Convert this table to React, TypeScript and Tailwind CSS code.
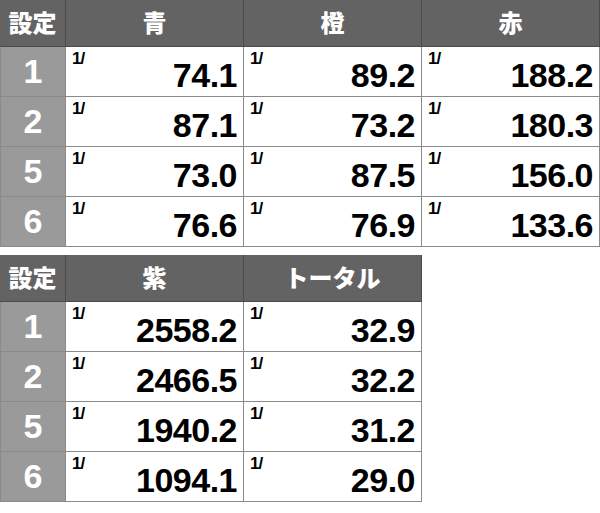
import React from "react";

const font = { fontFamily: '"Liberation Sans", Arial, sans-serif' };
const cjk = { fontFamily: '"Noto Sans CJK JP", "Noto Sans", sans-serif' };

type Table = { heads: string[]; rows: { s: string; v: string[] }[] };

const t1: Table = {
  heads: ["青", "橙", "赤"],
  rows: [
    { s: "1", v: ["74.1", "89.2", "188.2"] },
    { s: "2", v: ["87.1", "73.2", "180.3"] },
    { s: "5", v: ["73.0", "87.5", "156.0"] },
    { s: "6", v: ["76.6", "76.9", "133.6"] },
  ],
};
const t2: Table = {
  heads: ["紫", "トータル"],
  rows: [
    { s: "1", v: ["2558.2", "32.9"] },
    { s: "2", v: ["2466.5", "32.2"] },
    { s: "5", v: ["1940.2", "31.2"] },
    { s: "6", v: ["1094.1", "29.0"] },
  ],
};

function T({ t }: { t: Table }) {
  return (
    <div className="flex flex-col">
      <div className="flex h-[47px] bg-[#636363] border-b border-[#4a4a4a]">
        <div
          className="w-[66px] flex items-center justify-center text-white font-black text-[24px] border-r border-[#4a4a4a] pb-[2px]"
          style={cjk}
        >
          設定
        </div>
        {t.heads.map((h) => (
          <div
            key={h}
            className="w-[178px] flex items-center justify-center text-white font-black text-[24px] border-r border-[#4a4a4a] pb-[2px]"
            style={cjk}
          >
            {h}
          </div>
        ))}
      </div>
      {t.rows.map((r) => (
        <div key={r.s} className="flex h-[50px] border-b border-[#8a8a8a]">
          <div
            className="w-[66px] flex items-center justify-center bg-[#9a9a9a] text-white font-bold text-[34px] border-r border-[#8a8a8a] border-l border-l-[#8a8a8a]"
            style={font}
          >
            {r.s}
          </div>
          {r.v.map((v, i) => (
            <div
              key={i}
              className="w-[178px] relative bg-white border-r border-[#8a8a8a]"
              style={font}
            >
              <span className="absolute left-[6px] top-[3px] text-[17px] font-bold text-black leading-none tracking-[-1px]">
                1/
              </span>
              <span className="absolute right-[6px] bottom-[4px] text-[34px] font-bold text-black leading-none tracking-[-0.5px]">
                {v}
              </span>
            </div>
          ))}
        </div>
      ))}
    </div>
  );
}

export default function App() {
  return (
    <div className="w-[600px] h-[513px] bg-white flex flex-col gap-[8px] items-start">
      <T t={t1} />
      <T t={t2} />
    </div>
  );
}
